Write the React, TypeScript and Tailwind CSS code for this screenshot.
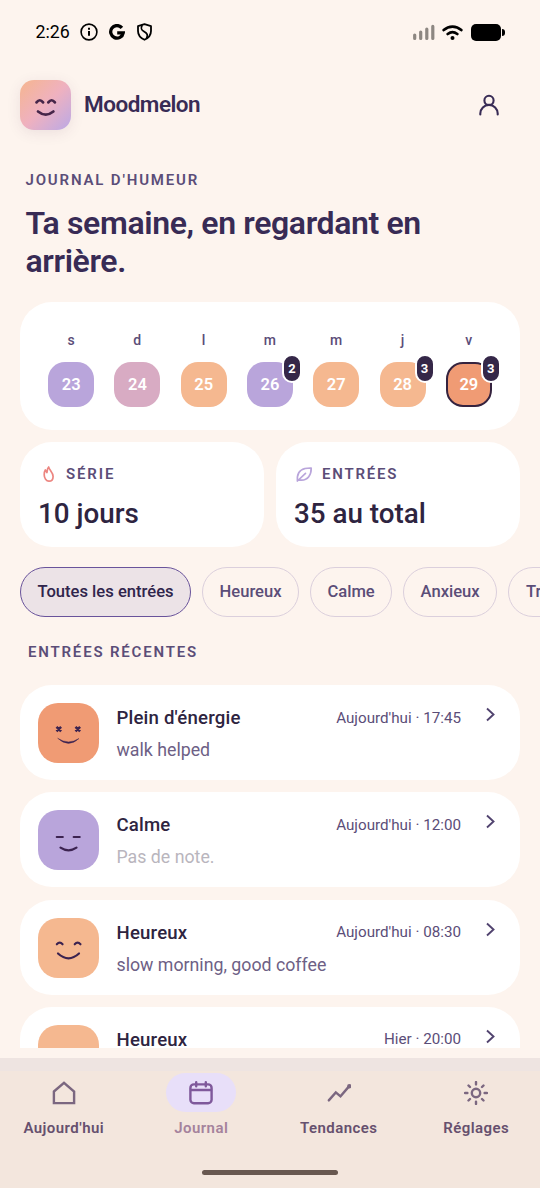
import React, { useState } from 'react';

type Mood = 'energetic' | 'calm' | 'happy';

const week = [
  { label: 's', day: 23, color: 'bg-[#b9a5db]' },
  { label: 'd', day: 24, color: 'bg-[#d8abc3]' },
  { label: 'l', day: 25, color: 'bg-[#f5b890]' },
  { label: 'm', day: 26, color: 'bg-[#b9a5db]', count: 2 },
  { label: 'm', day: 27, color: 'bg-[#f5b890]' },
  { label: 'j', day: 28, color: 'bg-[#f5b890]', count: 3 },
  { label: 'v', day: 29, color: 'bg-[#f09b74]', count: 3, today: true },
];

const filters = [
  { label: 'Toutes les entrées', width: 'w-[171px]' },
  { label: 'Heureux', width: 'w-[97.500px]' },
  { label: 'Calme', width: 'w-[82px]' },
  { label: 'Anxieux', width: 'w-[94.500px]' },
  { label: 'Triste', width: 'w-[78px]' },
];

const entries: { mood: Mood; title: string; note?: string; time: string }[] = [
  { mood: 'energetic', title: "Plein d'énergie", note: 'walk helped', time: "Aujourd'hui · 17:45" },
  { mood: 'calm', title: 'Calme', time: "Aujourd'hui · 12:00" },
  { mood: 'happy', title: 'Heureux', note: 'slow morning, good coffee', time: "Aujourd'hui · 08:30" },
  { mood: 'happy', title: 'Heureux', note: '', time: 'Hier · 20:00' },
];

const moodColors: Record<Mood, string> = {
  energetic: 'bg-[#f09b74]',
  calm: 'bg-[#b9a5db]',
  happy: 'bg-[#f5b890]',
};

const StatusBar = () => (
  <div className="flex h-16 items-center justify-between pl-[35.500px] pr-[35px] text-black">
    <div className="flex items-center">
      <span className="w-[44.500px] text-[17.800px] leading-none">2:26</span>
      <svg width="18" height="18" viewBox="0 0 18 18" fill="none" stroke="currentColor">
        <circle cx="9" cy="9" r="7.900" strokeWidth="1.600" />
        <path d="M9 8v4.700M9 4.800v1.900" strokeWidth="2" />
      </svg>
      <svg className="ml-[11px]" width="16" height="17" viewBox="0 0 16 17" fill="none" stroke="currentColor" strokeWidth="3.300">
        <path d="M12.900 3.900A6.300 6.300 0 1 0 14.200 8.900H8.200" />
      </svg>
      <svg className="ml-[11px]" width="17" height="18" viewBox="0 0 17 18" fill="none" stroke="currentColor" strokeWidth="1.800">
        <path d="M8.500 1.200 15 3.200V8c0 4-2.500 7-6.500 8.800C4.500 15 2 12 2 8V3.200Z" strokeLinejoin="round" />
        <path d="M6.200 2.200C4.500 5.500 5 6.800 8 8.500s4.500 3.500 2.500 6.700" />
      </svg>
    </div>
    <div className="flex items-center">
      <svg width="22" height="17" viewBox="0 0 22 17" stroke="#8d8782" strokeWidth="3.200" strokeLinecap="round">
        <path d="M1.700 11v3.500M7.700 8v6.500M13.800 5v9.500M19.800 2.400v12.100" />
      </svg>
      <svg className="ml-[7px]" width="21" height="17" viewBox="0 0 21 17" fill="none" stroke="currentColor" strokeWidth="2.700" strokeLinecap="round">
        <path d="M1.700 6c5.200-4.600 12.400-4.600 17.600 0M5.700 10c3-2.300 6.600-2.300 9.600 0" />
        <circle cx="10.500" cy="14" r="2" fill="currentColor" stroke="none" />
      </svg>
      <div className="ml-[8px] h-[17px] w-[30px] rounded-[5px] bg-black" />
      <div className="ml-px h-[7px] w-[3px] rounded-r bg-black" />
    </div>
  </div>
);

const MoodFace = ({ mood }: { mood: Mood }) => (
  <div className={`h-[60px] w-[61px] shrink-0 rounded-[20px] ${moodColors[mood]}`}>
    <svg width="61" height="60" viewBox="0 0 61 60" fill="none" stroke="#3c2350" strokeLinecap="round">
      {mood === 'energetic' && (
        <>
          <path d="m18.500 23.800 4.600 4.600m0-4.600-4.600 4.600M37.500 23.800l4.600 4.600m0-4.600-4.600 4.600" strokeWidth="2.500" strokeLinecap="butt" />
          <path d="M20 35.500q10.500 9.800 21 0q-10.500 6.800-21 0Z" fill="#3c2350" strokeWidth=".4" />
        </>
      )}
      {mood === 'calm' && (
        <>
          <path d="M18.800 27h6M35.700 27h6" strokeWidth="2.200" />
          <path d="M22.500 37.600q8 5.400 16 0" strokeWidth="2.200" />
        </>
      )}
      {mood === 'happy' && (
        <>
          <path d="M18.800 26.300q2.900-3.400 5.800 0M36.700 26.300q2.900-3.400 5.800 0" strokeWidth="2.100" />
          <path d="M20 35.500q10.500 9.600 21 0" strokeWidth="2.200" />
        </>
      )}
    </svg>
  </div>
);

const Header = () => (
  <header className="mt-4 flex h-[50px] items-center px-5">
    <div className="h-[50px] w-[51px] rounded-[14px] bg-linear-135 from-[#f6b58e] via-[#efb1bf] to-[#bba8e5] shadow-[0_3px_14px_rgba(90,50,90,0.1)]">
      <svg width="51" height="50" viewBox="0 0 51 50" fill="none" stroke="#46264a" strokeWidth="2.700" strokeLinecap="round">
        <path d="M16.500 22.400q3.300-4.300 6.600 0M28.300 22.400q3.300-4.300 6.600 0M18 31.500q7.700 6.200 15.400 0" />
      </svg>
    </div>
    <span className="ml-[13px] text-[22.500px] font-semibold tracking-[-0.022em] text-[#382b55]">Moodmelon</span>
    <button className="mr-[20px] ml-auto" aria-label="Profil">
      <svg width="22" height="22" viewBox="0 0 22 22" fill="none" stroke="#382b55" strokeWidth="2.100" strokeLinecap="round">
        <circle cx="11" cy="6.400" r="4.600" />
        <path d="M2.300 20.500v-.9a8.700 8.700 0 0 1 17.400 0v.9" />
      </svg>
    </button>
  </header>
);

const WeekCard = () => (
  <section className="mx-5 mt-[22px] grid h-32 grid-cols-7 rounded-[32px] bg-white px-[18px] pt-[28px]">
    {week.map((d) => (
      <div key={d.day} className="flex flex-col items-center">
        <span className="h-[20px] text-[14px] leading-[20px] font-medium tracking-[0.02em] text-[#5b4d78]">{d.label}</span>
        <div
          className={`relative mt-3 flex h-[45px] w-[46px] items-center justify-center rounded-[17px] text-[16.500px] font-semibold text-white ${d.color} ${
            d.today ? 'border-[2.500px] border-[#35233f]' : ''
          }`}
        >
          <span className="mt-[2px]">{d.day}</span>
          {d.count && (
            <span
              className={`absolute flex h-[29px] w-[20px] items-center justify-center rounded-full border-2 border-white bg-[#352748] text-[13px] font-bold ${
                d.today ? '-top-[10px] -right-[11px]' : '-top-2 -right-[9px]'
              }`}
            >
              {d.count}
            </span>
          )}
        </div>
      </div>
    ))}
  </section>
);

const Stats = () => (
  <section className="mx-5 mt-3 grid h-[105px] grid-cols-2 gap-3">
    <div className="rounded-[32px] bg-white pt-[22px] pl-[18px]">
      <div className="flex h-5 items-center">
        <svg width="20" height="20" viewBox="0 0 20 20" fill="none" stroke="#ec8580" strokeWidth="1.700" strokeLinejoin="round">
          <path d="M10.700 3c.3 2.600 4.400 5.200 4.400 9.400 0 2.900-1.800 4.800-4.200 4.800-2.600 0-4.700-3-4.700-6.400 0-2 .3-3.600 1.100-4.800l1.600 2.600C9.400 6.600 9 4.800 10.700 3Z" />
        </svg>
        <span className="mt-px ml-2 text-[15px] font-semibold tracking-[0.125em] text-[#5b4d78]">SÉRIE</span>
      </div>
      <div className="mt-[12px] text-[27.800px] leading-9 font-medium text-[#2e2440]">10 jours</div>
    </div>
    <div className="rounded-[32px] bg-white pt-[22px] pl-[18px]">
      <div className="flex h-5 items-center">
        <svg width="20" height="20" viewBox="0 0 20 20" fill="none" stroke="#b9a5db" strokeWidth="1.700" strokeLinecap="round" strokeLinejoin="round">
          <path d="M3.400 17V13C4 7 9 3.800 17.200 4c.2 7-3.500 12-9.700 12.200H4.200M3.400 17 11.500 9.400" />
        </svg>
        <span className="mt-px ml-2 text-[15px] font-semibold tracking-[0.12em] text-[#5b4d78]">ENTRÉES</span>
      </div>
      <div className="mt-[12px] text-[27.800px] leading-9 font-medium text-[#2e2440]">35 au total</div>
    </div>
  </section>
);

const navIcons = {
  home: <path d="M1.900 10.500 12 1.900l10.100 8.600v11.600H1.900Z" />,
  journal: (
    <>
      <rect x="1.400" y="3.400" width="21.200" height="18.800" rx="3.500" />
      <path d="M2 9h20M7.200 1.200v4M16.800 1.200v4" />
    </>
  ),
  trends: (
    <>
      <path d="m1.800 19.400 7-8 4.700 4L22 5.400" />
      <circle cx="22.300" cy="5.200" r="1" fill="currentColor" />
    </>
  ),
  settings: (
    <>
      <circle cx="12" cy="12" r="4.200" />
      <path d="M12 1v2.400M12 20.600V23M1 12h2.400M20.600 12H23M4.500 4.500 6 6M18 18l1.500 1.500M4.500 19.500 6 18M18 6l1.500-1.500" />
    </>
  ),
};

const tabs = [
  { id: 'home', label: "Aujourd'hui" },
  { id: 'journal', label: 'Journal' },
  { id: 'trends', label: 'Tendances' },
  { id: 'settings', label: 'Réglages' },
] as const;

const BottomNav = () => {
  const [active, setActive] = useState<string>('journal');

  return (
    <nav className="mt-[10px] h-[130px] shrink-0 border-t-[13px] border-[#eee4e1] bg-[#f3e6dd]">
      <div className="-mx-[5px] flex">
        {tabs.map((tab) => (
          <button
            key={tab.id}
            onClick={() => setActive(tab.id)}
            className="flex flex-1 flex-col items-center pt-[2px]"
          >
            <span
              className={`flex h-[39px] w-[70px] items-center justify-center rounded-full ${
                active === tab.id ? 'bg-[#e8dff9] text-[#7f599b]' : 'text-[#7b6780]'
              }`}
            >
              <svg width="24" height="24" viewBox="0 0 24 24" fill="none" stroke="currentColor" strokeWidth="2.400" strokeLinecap="round">
                {navIcons[tab.id]}
              </svg>
            </span>
            <span
              className={`mt-[6px] text-[15px] leading-5 font-semibold tracking-[0.03em] ${
                active === tab.id ? 'text-[#a5829c]' : 'text-[#66506e]'
              }`}
            >
              {tab.label}
            </span>
          </button>
        ))}
      </div>
      <div className="mx-auto mt-[32px] h-[5px] w-[136px] rounded-full bg-[#685850]" />
    </nav>
  );
};

const App = () => {
  const [filter, setFilter] = useState('Toutes les entrées');

  return (
    <div className="flex h-[1188px] w-[540px] flex-col overflow-hidden bg-[#fdf4ee] font-['Roboto',sans-serif]">
      <div className="min-h-0 flex-1 overflow-hidden">
        <StatusBar />
        <Header />

        <div className="mt-[40px] pr-[26px] pl-[25.500px]">
          <p className="text-[15px] leading-5 font-semibold tracking-[0.122em] text-[#5b4d78]">JOURNAL D'HUMEUR</p>
          <h1 className="mt-[15px] text-[32px] leading-[37.500px] font-semibold tracking-[-0.36px] text-[#382b55]">
            Ta semaine, en regardant en arrière.
          </h1>
        </div>

        <WeekCard />
        <Stats />

        {/* Mood filters */}
        <div className="mt-5 flex h-[50px] gap-[10.800px] overflow-hidden pl-5">
          {filters.map((f) => (
            <button
              key={f.label}
              onClick={() => setFilter(f.label)}
              className={`shrink-0 rounded-full border text-[16.600px] font-medium ${f.width} ${
                filter === f.label
                  ? 'border-[#69539b] bg-[#ece3e7] text-[#30254c]'
                  : 'border-[#dbcfdc] text-[#5b4d78]'
              }`}
            >
              {f.label}
            </button>
          ))}
        </div>

        <h2 className="mt-[25px] ml-7 text-[15px] leading-5 font-semibold tracking-[0.121em] text-[#5b4d78]">ENTRÉES RÉCENTES</h2>

        <div className="mx-5 mt-[23px] flex flex-col gap-[12.300px]">
          {entries.map((entry) => (
            <article key={entry.time} className="flex h-[95px] shrink-0 items-start rounded-[32px] bg-white px-[18px] pt-[18px]">
              <MoodFace mood={entry.mood} />
              <div className="mt-[3px] ml-[17.500px] flex-1">
                <div className="flex h-6 items-center justify-between">
                  <span className="text-[18.600px] leading-6 font-medium tracking-[0.01em] text-[#2e2440]">{entry.title}</span>
                  <span className="text-[15.200px] text-[#5b4d78]">{entry.time}</span>
                </div>
                <p className={`mt-2 text-[17.750px] leading-6 ${entry.note ? 'text-[#6d6085]' : 'text-[#b9b5bd]'}`}>
                  {entry.note ?? 'Pas de note.'}
                </p>
              </div>
              <svg className="mt-[4px] mr-[5px] ml-[24px]" width="12" height="15" viewBox="0 0 12 15" fill="none" stroke="#51436f" strokeWidth="1.900">
                <path d="m2 1.500 6.500 6-6.500 6" />
              </svg>
            </article>
          ))}
        </div>
      </div>
      <BottomNav />
    </div>
  );
};

export default App;
